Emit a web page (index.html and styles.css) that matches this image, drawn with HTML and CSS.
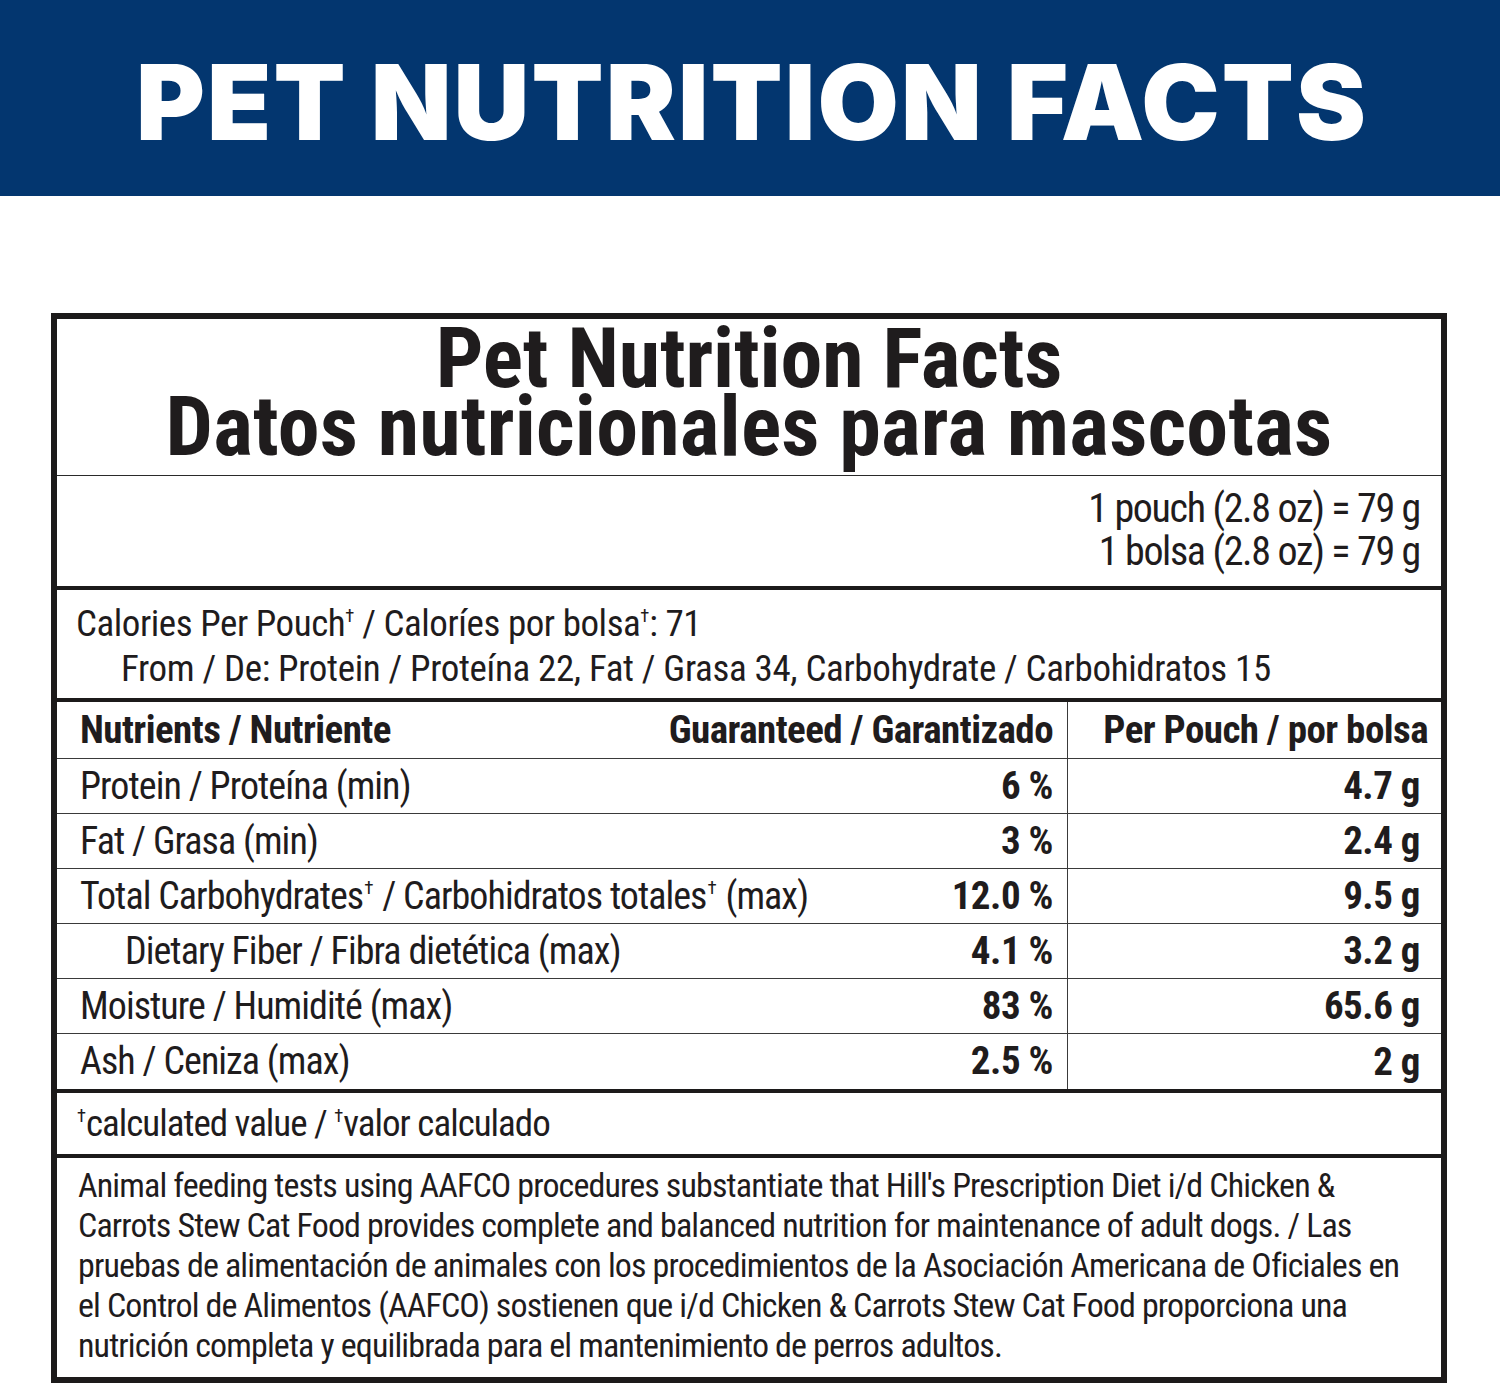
FILE: index.html
```html
<!DOCTYPE html>
<html lang="en">
<head>
<meta charset="utf-8">
<title>Pet Nutrition Facts</title>
<link rel="stylesheet" href="styles.css">
</head>
<body>
<header class="banner">
  <h1 class="banner-title">PET NUTRITION FACTS</h1>
</header>
<main class="page">
  <section class="label">
    <div class="label-title">
      <div class="title-en">Pet Nutrition Facts</div>
      <div class="title-es">Datos nutricionales para mascotas</div>
    </div>
    <div class="serving">
      <div>1 pouch (2.8 oz) = 79 g</div>
      <div>1 bolsa (2.8 oz) = 79 g</div>
    </div>
    <div class="calories">
      <div>Calories Per Pouch<sup>†</sup> / Caloríes por bolsa<sup>†</sup>: 71</div>
      <div class="indent">From / De: Protein / Proteína 22, Fat / Grasa 34, Carbohydrate / Carbohidratos 15</div>
    </div>
    <div class="nutrients">
      <div class="row head">
        <div class="name">Nutrients / Nutriente</div>
        <div class="guar">Guaranteed / Garantizado</div>
        <div class="pouch">Per Pouch / por bolsa</div>
      </div>
      <div class="row">
        <div class="name">Protein / Proteína (min)</div>
        <div class="guar">6 %</div>
        <div class="pouch">4.7 g</div>
      </div>
      <div class="row">
        <div class="name">Fat / Grasa (min)</div>
        <div class="guar">3 %</div>
        <div class="pouch">2.4 g</div>
      </div>
      <div class="row">
        <div class="name">Total Carbohydrates<sup>†</sup> / Carbohidratos totales<sup>†</sup> (max)</div>
        <div class="guar">12.0 %</div>
        <div class="pouch">9.5 g</div>
      </div>
      <div class="row">
        <div class="name sub">Dietary Fiber / Fibra dietética (max)</div>
        <div class="guar">4.1 %</div>
        <div class="pouch">3.2 g</div>
      </div>
      <div class="row">
        <div class="name">Moisture / Humidité (max)</div>
        <div class="guar">83 %</div>
        <div class="pouch">65.6 g</div>
      </div>
      <div class="row last">
        <div class="name">Ash / Ceniza (max)</div>
        <div class="guar">2.5 %</div>
        <div class="pouch">2 g</div>
      </div>
    </div>
    <div class="footnote"><sup>†</sup>calculated value / <sup>†</sup>valor calculado</div>
    <p class="statement">Animal feeding tests using AAFCO procedures substantiate that Hill's Prescription Diet i/d Chicken &amp;<br>Carrots Stew Cat Food provides complete and balanced nutrition for maintenance of adult dogs. / Las<br>pruebas de alimentación de animales con los procedimientos de la Asociación Americana de Oficiales en<br>el Control de Alimentos (AAFCO) sostienen que i/d Chicken &amp; Carrots Stew Cat Food proporciona una<br>nutrición completa y equilibrada para el mantenimiento de perros adultos.</p>
  </section>
</main>
</body>
</html>
```
FILE: styles.css
```css
* { box-sizing: border-box; }
html, body { margin: 0; padding: 0; background: #ffffff; }
body {
  width: 1500px;
  height: 1386px;
  overflow: hidden;
  color: #1f1c1d;
  font-family: Roboto, "Liberation Sans", sans-serif;
  font-stretch: 75%;
}

.banner {
  height: 196px;
  background: #03366f;
  display: flex;
  align-items: center;
  justify-content: center;
}
.banner-title {
  margin: 6px 0 0 0;
  color: #ffffff;
  font-family: Inter, "Noto Sans", sans-serif;
  font-stretch: 100%;
  font-weight: 900;
  font-size: 105px;
  letter-spacing: 2.1px;
  line-height: 1;
  padding-left: 4px;
}

.page {
  padding: 117px 53px 0 51px;
}

.label {
  width: 1396px;
  height: 1070px;
  border: 6px solid #1c1a1a;
  display: flex;
  flex-direction: column;
}

.label-title {
  height: 157px;
  border-bottom: 1.5px solid #2a2a2a;
  text-align: center;
  font-weight: 700;
  font-size: 84px;
  line-height: 68px;
  padding-top: 6px;
}
.title-en { letter-spacing: -0.2px; }
.title-es { letter-spacing: 0.2px; }

.serving {
  height: 114px;
  border-bottom: 4px solid #1c1a1a;
  text-align: right;
  font-size: 40px;
  line-height: 43px;
  padding: 11px 21px 0 0;
  letter-spacing: -1.35px;
}

.calories {
  height: 112px;
  border-bottom: 4px solid #1c1a1a;
  font-size: 37px;
  line-height: 45px;
  padding: 11px 0 0 19px;
  letter-spacing: -0.45px;
}
.calories .indent { padding-left: 45px; letter-spacing: -0.35px; }

sup {
  font-size: 0.5em;
  line-height: 0;
  vertical-align: 0;
  position: relative;
  top: -0.75em;
  margin: 0;
  letter-spacing: 0;
}
.row sup { margin: 0 1px; }

.row {
  display: grid;
  grid-template-columns: 1fr auto 374px;
  height: 55px;
  border-bottom: 1.5px solid #3a3a3a;
  font-size: 38px;
  letter-spacing: -0.95px;
  align-items: center;
}
.row .name {
  padding-left: 23px;
  white-space: nowrap;
  line-height: 45px;
}
.row .name.sub { padding-left: 68px; }
.row .guar {
  padding-right: 14px;
  text-align: right;
  font-weight: 700;
  font-size: 39px;
  line-height: 45px;
  letter-spacing: -0.5px;
}
.row .pouch {
  align-self: stretch;
  display: flex;
  align-items: center;
  justify-content: flex-end;
  padding-right: 21px;
  font-weight: 700;
  font-size: 39px;
  letter-spacing: -0.5px;
  border-left: 1.5px solid #3a3a3a;
}
.row.head { height: 57px; }
.row.head .name {
  font-weight: 700;
  font-size: 39px;
  letter-spacing: -0.55px;
}
.row.head .guar,
.row.head .pouch { letter-spacing: -0.55px; }
.row.head .pouch { padding-right: 13px; }
.row.last { border-bottom: 4px solid #1c1a1a; height: 59px; }

.footnote {
  height: 65px;
  border-bottom: 4px solid #1c1a1a;
  font-size: 37px;
  letter-spacing: -1px;
  padding: 8px 0 0 20px;
  line-height: 45px;
}

.statement {
  margin: 0;
  padding: 7px 0 0 21px;
  font-size: 34px;
  line-height: 40px;
  letter-spacing: -0.87px;
  white-space: nowrap;
}
```
